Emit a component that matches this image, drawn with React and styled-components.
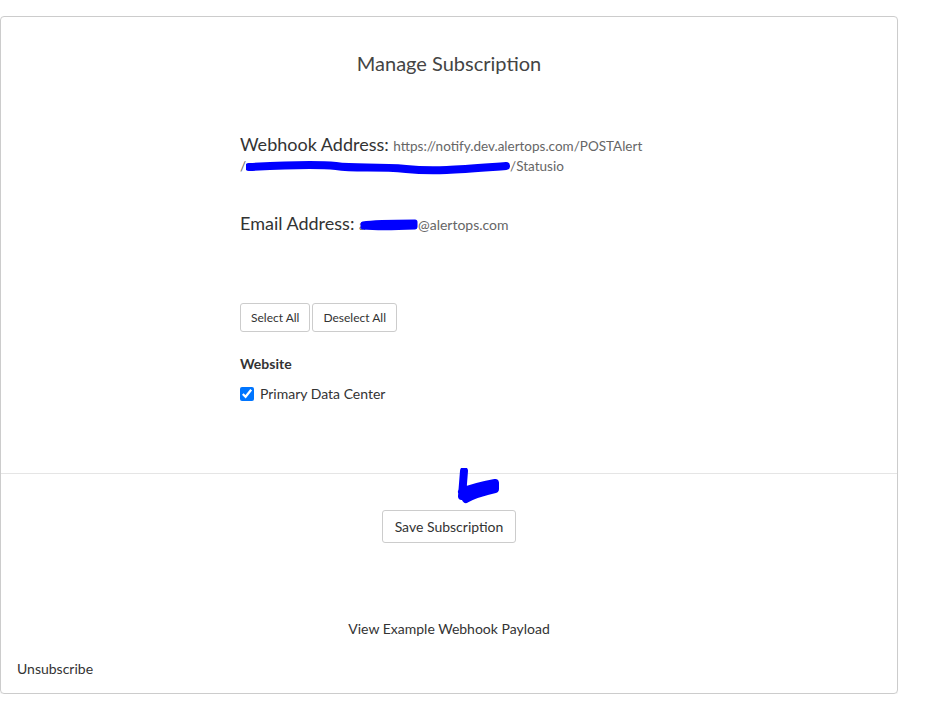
import styled, { createGlobalStyle } from 'styled-components';

const GlobalStyle = createGlobalStyle`
  html, body {
    margin: 0;
    padding: 0;
    background: #fff;
  }
  body {
    font-family: Lato, 'Open Sans', sans-serif;
    color: #333;
  }
`;

const Card = styled.div`
  position: relative;
  box-sizing: border-box;
  width: 898px;
  margin-top: 16px;
  border: 1px solid #ccc;
  border-radius: 4px;
  box-shadow: 0 1px 1px rgba(0, 0, 0, 0.06);
`;

const Top = styled.section`
  padding: 34px 0 70px;
  border-bottom: 1px solid #e5e5e5;
`;

const Title = styled.h2`
  margin: 0;
  font-size: 20px;
  line-height: 24px;
  font-weight: 400;
  color: #444;
  text-align: center;
`;

const Column = styled.div`
  width: 418px;
  margin: 0 auto;
`;

const Field = styled.div`
  margin-top: ${(p) => p.$top}px;
  font-size: 18px;
  line-height: 20px;
  color: #333;
`;

const Value = styled.span`
  font-size: ${(p) => p.$size || 14}px;
  line-height: 14px;
  color: #666;
`;

const Scribble = styled.svg`
  display: inline-block;
  vertical-align: middle;
  margin: -8px 0;
`;

const ButtonRow = styled.div`
  display: flex;
  gap: 2px;
  margin-top: 70px;
`;

const SmallButton = styled.button`
  font-family: inherit;
  font-size: 12px;
  line-height: 15px;
  color: #333;
  background: #fff;
  border: 1px solid #ccc;
  border-radius: 3px;
  padding: 6px 10px;
`;

const GroupTitle = styled.div`
  margin-top: 23px;
  font-size: 14px;
  line-height: 18px;
  font-weight: 700;
  color: #333;
`;

const CheckRow = styled.label`
  display: flex;
  align-items: center;
  gap: 6px;
  margin-top: 12px;
  font-size: 14px;
  line-height: 18px;
  color: #333;

  input {
    margin: 0;
    width: 14px;
    height: 14px;
  }
`;

const Bottom = styled.section`
  position: relative;
  padding: 36px 16px 16px;
  display: flex;
  flex-direction: column;
`;

const SaveButton = styled.button`
  align-self: center;
  font-family: inherit;
  font-size: 14px;
  line-height: 17px;
  color: #333;
  background: #fff;
  border: 1px solid #ccc;
  border-radius: 3px;
  padding: 7px 12px;
`;

const CenterLink = styled.a`
  margin-top: 77px;
  font-size: 14px;
  line-height: 17px;
  color: #333;
  text-align: center;
  text-decoration: none;
`;

const LeftLink = styled.a`
  margin-top: 23px;
  font-size: 14px;
  line-height: 17px;
  color: #333;
  text-decoration: none;
`;

const Arrow = styled.svg`
  position: absolute;
  left: 453px;
  top: -6px;
`;

const App = () => (
  <>
    <GlobalStyle />
    <Card>
      <Top>
        <Title>Manage Subscription</Title>
        <Column>
          <Field $top={59}>
            Webhook Address: <Value $size={13.5}>https://notify.dev.alertops.com/POSTAlert</Value>
            <br />
            <Value $size={13.5}>
              /
              <Scribble width="264" height="16" viewBox="0 0 264 16">
                <path
                  d="M3 7 C40 5 70 4 90 6 C110 9 130 6 160 9 C190 12 220 9 260 6"
                  stroke="#0000ff"
                  strokeWidth="8"
                  strokeLinecap="round"
                  fill="none"
                />
              </Scribble>
              /Statusio
            </Value>
          </Field>
          <Field $top={39}>
            Email Address: <Value>a</Value>
            <Scribble width="58" height="14" viewBox="0 0 58 14" style={{ marginLeft: -6 }}>
              <path
                d="M3 6 C15 4 30 4 55 4 L55 9 C30 10 15 10 3 9 Z"
                stroke="#0000ff"
                strokeWidth="5"
                strokeLinejoin="round"
                fill="#0000ff"
              />
            </Scribble>
            <Value>@alertops.com</Value>
          </Field>
          <ButtonRow>
            <SmallButton>Select All</SmallButton>
            <SmallButton>Deselect All</SmallButton>
          </ButtonRow>
          <GroupTitle>Website</GroupTitle>
          <CheckRow>
            <input type="checkbox" defaultChecked />
            Primary Data Center
          </CheckRow>
        </Column>
      </Top>
      <Bottom>
        <Arrow width="48" height="40" viewBox="0 0 48 40">
          <path
            d="M10 3 L8 28 M8 24 C15 21 25 18 41 15 L41 21 C28 24 18 27 12 31"
            stroke="#0000ff"
            strokeWidth="8"
            strokeLinecap="round"
            strokeLinejoin="round"
            fill="none"
          />
        </Arrow>
        <SaveButton>Save Subscription</SaveButton>
        <CenterLink href="#">View Example Webhook Payload</CenterLink>
        <LeftLink href="#">Unsubscribe</LeftLink>
      </Bottom>
    </Card>
  </>
);

export default App;
